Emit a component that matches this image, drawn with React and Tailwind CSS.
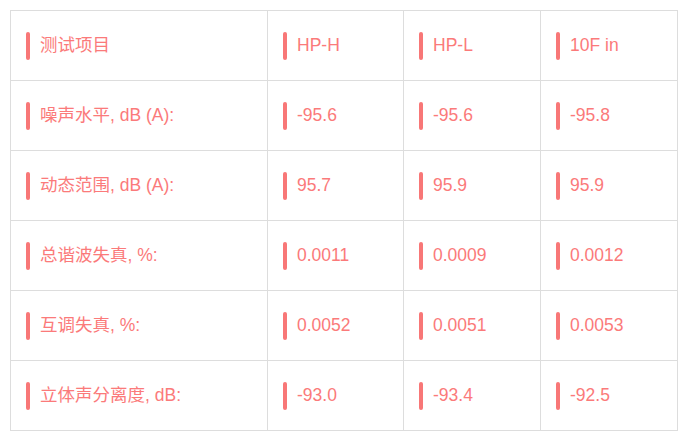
import React from 'react';

const head = ['测试项目', 'HP-H', 'HP-L', '10F in'];
const rows = [
    ['噪声水平, dB (A):', '-95.6', '-95.6', '-95.8'],
    ['动态范围, dB (A):', '95.7', '95.9', '95.9'],
    ['总谐波失真, %:', '0.0011', '0.0009', '0.0012'],
    ['互调失真, %:', '0.0052', '0.0051', '0.0053'],
    ['立体声分离度, dB:', '-93.0', '-93.4', '-92.5'],
];

const Cell = ({ children }) => (
    <td className='border border-[#dddddd] h-[70px] pl-[15px] align-middle'>
        <div className='flex items-center'>
            <span className='block w-[4px] h-[28px] rounded-full bg-[#f87777] mr-[10px]'></span>
            <span>{children}</span>
        </div>
    </td>
);

const App = () => {
    return (
        <div className='w-[687px] h-[439px] bg-white p-[10px] font-["Liberation_Sans","Noto_Sans_CJK_SC",sans-serif] text-[17.5px] text-[#fb7a7a]'>
            <table className='border-collapse w-[668px] table-fixed'>
                <colgroup>
                    <col className='w-[257px]' />
                    <col className='w-[136px]' />
                    <col className='w-[137px]' />
                    <col className='w-[137px]' />
                </colgroup>
                <tbody>
                    <tr>
                        {head.map((h) => <Cell key={h}>{h}</Cell>)}
                    </tr>
                    {rows.map((r) => (
                        <tr key={r[0]}>
                            {r.map((c, i) => <Cell key={i}>{c}</Cell>)}
                        </tr>
                    ))}
                </tbody>
            </table>
        </div>
    );
};

export default App;
